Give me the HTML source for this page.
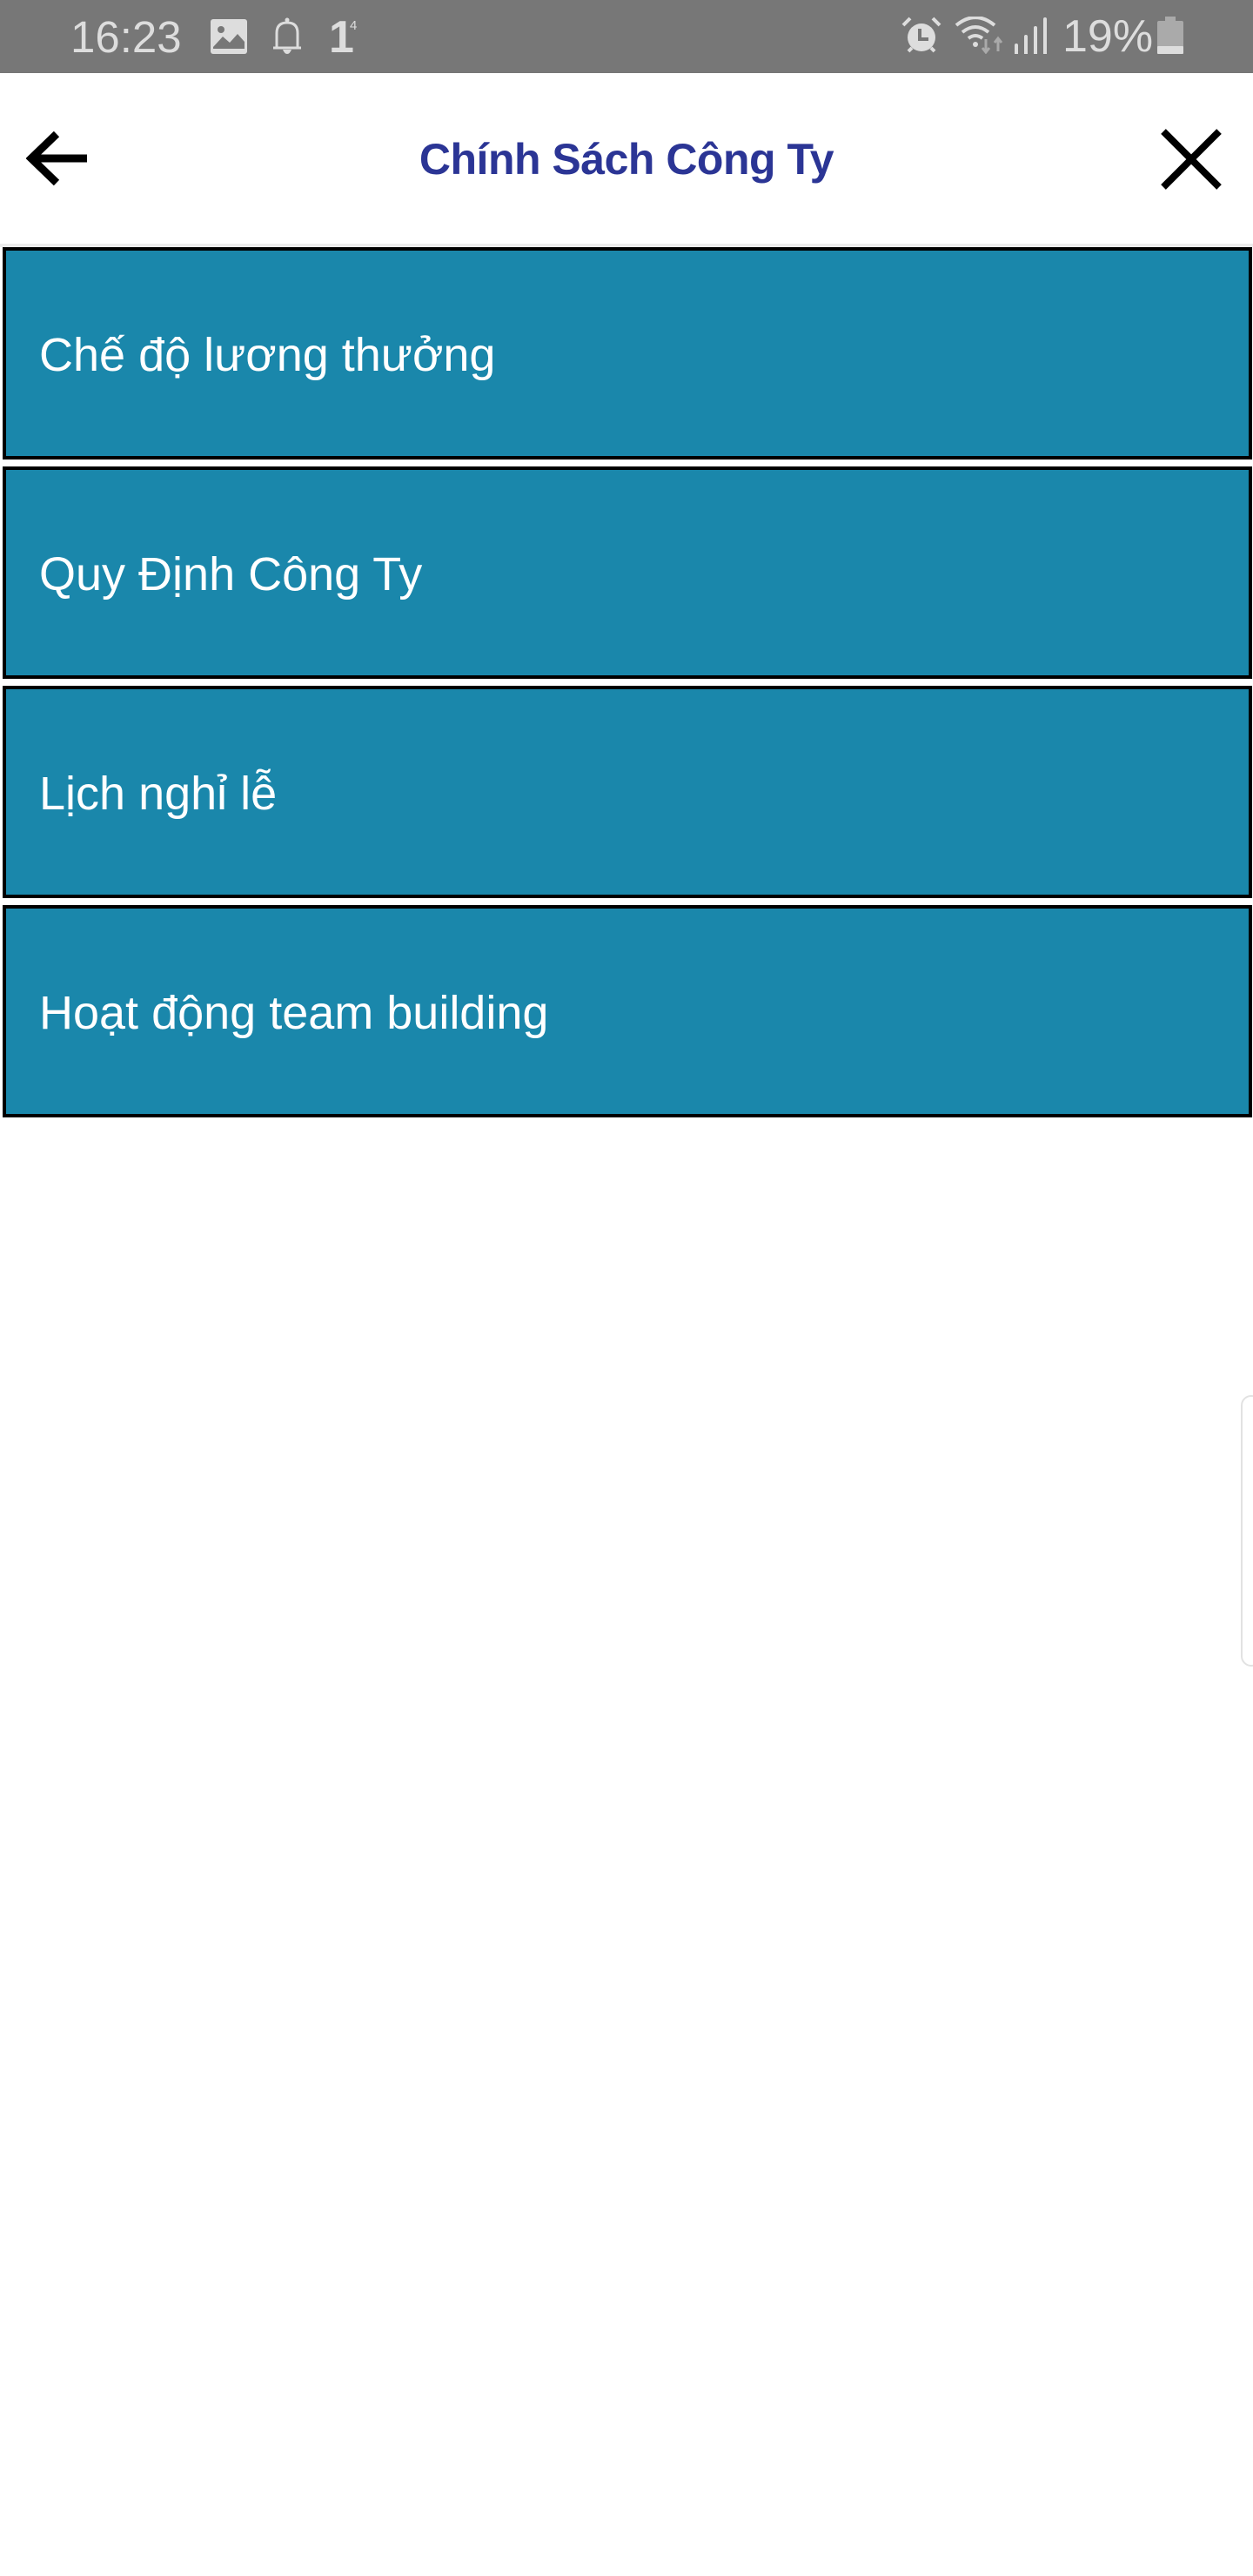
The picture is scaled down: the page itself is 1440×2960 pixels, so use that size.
<!DOCTYPE html>
<html><head><meta charset="utf-8"><style>
html,body{margin:0;padding:0;width:1440px;height:2960px;background:#fff;overflow:hidden;position:relative;font-family:"Liberation Sans",sans-serif}
.sb{position:absolute;left:0;top:0;width:1440px;height:84px;background:#777}
.st{position:absolute;color:#ddd;font-size:52px;line-height:52px}
.hdr{position:absolute;top:84px;left:0;width:1440px;height:196px;background:#fff}
.title{position:absolute;left:0;width:1440px;top:155px;text-align:center;color:#2b3595;font-weight:bold;font-size:50px;line-height:56px;letter-spacing:-0.5px}
.line{position:absolute;top:280px;left:0;width:1440px;height:4px;background:#ececec}
.box{position:absolute;left:3px;width:1428px;height:236px;background:#1a87ab;border:4px solid #000}
.box span{position:absolute;left:38px;top:90px;color:#fff;font-size:54px;line-height:60px;letter-spacing:0px}
</style></head><body>
<div class="sb"></div>
<div class="st" style="left:81px;top:17px;font-size:51px">16:23</div>
<svg style="position:absolute;left:242px;top:22px" width="42" height="40" viewBox="0 0 42 40"><rect x="0" y="0" width="42" height="40" rx="3" fill="#ddd"/><circle cx="12" cy="12" r="4" fill="#777"/><path d="M3 32 L14 20 L22 27 L31 17 L39 26 L39 34 L3 34Z" fill="#777"/></svg>
<svg style="position:absolute;left:312px;top:20px" width="36" height="44" viewBox="0 0 36 44"><path d="M6 34 L6 18 Q6 6 18 6 Q30 6 30 18 L30 34 M2 35 L34 35" fill="none" stroke="#ddd" stroke-width="3"/><circle cx="18" cy="3" r="2.5" fill="#ddd"/><path d="M13 37 h10 q-2 5 -5 5 q-3 0 -5 -5z" fill="#ddd"/></svg>
<div class="st" style="left:378px;top:17px;font-weight:bold;font-size:52px">1</div>
<div class="st" style="left:402px;top:22px;font-size:15px;line-height:15px">4</div>
<svg style="position:absolute;left:1036px;top:19px" width="46" height="43" viewBox="0 0 46 43"><circle cx="23" cy="24" r="16" fill="#ddd"/><path d="M21 14 v12 h10" fill="none" stroke="#777" stroke-width="4"/><path d="M2 10 L10 2 M36 2 L44 10 M8 40 L12 36 M38 40 L34 36" stroke="#ddd" stroke-width="4"/></svg>
<svg style="position:absolute;left:1097px;top:19px" width="60" height="43" viewBox="0 0 60 43"><path d="M2 10 Q24 -8 46 10 M9 18 Q24 6 39 18 M16 25 Q24 19 32 25" fill="none" stroke="#ddd" stroke-width="4"/><circle cx="24" cy="32" r="3" fill="#ddd"/><path d="M36 26 v14 M32 36 l4 5 l4 -5 M50 40 v-14 M46 30 l4 -5 l4 5" fill="none" stroke="#aaa" stroke-width="3"/></svg>
<svg style="position:absolute;left:1165px;top:20px" width="40" height="42" viewBox="0 0 40 42"><path d="M3 42 v-10 M14 42 v-20 M25 42 v-30 M36 42 v-40" stroke="#ddd" stroke-width="4" stroke-linecap="round"/></svg>
<div class="st" style="left:1221px;top:16px;font-size:52px">19%</div>
<svg style="position:absolute;left:1330px;top:19px" width="30" height="43" viewBox="0 0 30 43"><rect x="9" y="0" width="12" height="6" fill="#aaa"/><rect x="0" y="5" width="30" height="38" rx="2" fill="#aaa"/><rect x="0" y="34" width="30" height="9" rx="1" fill="#ddd"/></svg>
<div class="hdr"></div>
<svg style="position:absolute;left:30px;top:150px" width="70" height="64" viewBox="0 0 70 64"><path d="M35 4 L6 32 L35 60 M6 32 L70 32" fill="none" stroke="#000" stroke-width="9"/></svg>
<svg style="position:absolute;left:1333px;top:147px" width="72" height="72" viewBox="0 0 72 72"><path d="M4 4 L68 68 M68 4 L4 68" stroke="#000" stroke-width="8"/></svg>
<div class="title">Chính Sách Công Ty</div>
<div class="line"></div>
<div class="box" style="top:284px"><span>Chế độ lương thưởng</span></div>
<div class="box" style="top:536px"><span>Quy Định Công Ty</span></div>
<div class="box" style="top:788px"><span>Lịch nghỉ lễ</span></div>
<div class="box" style="top:1040px"><span>Hoạt động team building</span></div>
<div style="position:absolute;left:1426px;top:1603px;width:20px;height:308px;border:2px solid #e2e2e2;border-radius:12px;background:#fff"></div>
</body></html>
